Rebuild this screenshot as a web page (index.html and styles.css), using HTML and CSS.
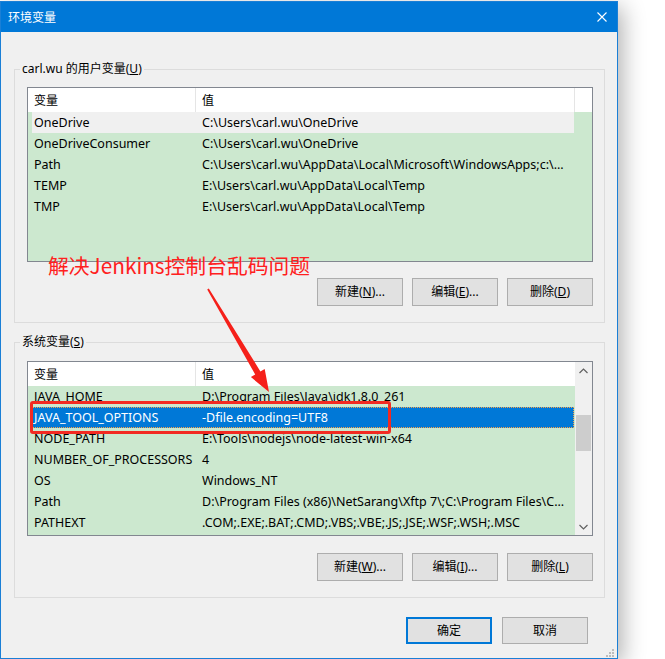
FILE: index.html
```html
<!DOCTYPE html>
<html lang="zh-CN">
<head>
<meta charset="utf-8">
<title>环境变量</title>
<link rel="stylesheet" href="styles.css">
</head>
<body>
<div class="window">
  <div class="titlebar">
    <span class="title">环境变量</span>
    <svg class="close" width="10" height="10" viewBox="0 0 10 10"><path d="M0.5 0.5 L9.5 9.5 M9.5 0.5 L0.5 9.5" stroke="#fff" stroke-width="1.1" fill="none"/></svg>
  </div>
  <div class="content">
    <fieldset class="group">
      <legend class="group-label">carl.wu 的用户变量(<u>U</u>)</legend>
      <div class="list">
        <div class="list-main">
          <div class="list-header header-user">
            <div class="hcell">变量</div>
            <div class="hcell hcell-val">值</div>
            <div class="hcell hcell-fill"></div>
          </div>
          <div class="list-body">
            <div class="row row-inactive"><span class="c1">OneDrive</span><span class="c2">C:\Users\carl.wu\OneDrive</span></div>
            <div class="row"><span class="c1">OneDriveConsumer</span><span class="c2">C:\Users\carl.wu\OneDrive</span></div>
            <div class="row"><span class="c1">Path</span><span class="c2">C:\Users\carl.wu\AppData\Local\Microsoft\WindowsApps;c:\...</span></div>
            <div class="row"><span class="c1">TEMP</span><span class="c2">E:\Users\carl.wu\AppData\Local\Temp</span></div>
            <div class="row"><span class="c1">TMP</span><span class="c2">E:\Users\carl.wu\AppData\Local\Temp</span></div>
          </div>
        </div>
      </div>
      <div class="btn-row">
        <button class="btn">新建(<u>N</u>)...</button>
        <button class="btn">编辑(<u>E</u>)...</button>
        <button class="btn">删除(<u>D</u>)</button>
      </div>
    </fieldset>

    <fieldset class="group group-sys">
      <legend class="group-label">系统变量(<u>S</u>)</legend>
      <div class="list">
        <div class="list-main">
          <div class="list-header">
            <div class="hcell">变量</div>
            <div class="hcell hcell-val">值</div>
          </div>
          <div class="list-body">
            <div class="row row-clipped"><span class="c1">JAVA_HOME</span><span class="c2">D:\Program Files\Java\jdk1.8.0_261</span></div>
            <div class="row row-selected"><span class="c1">JAVA_TOOL_OPTIONS</span><span class="c2">-Dfile.encoding=UTF8</span></div>
            <div class="row"><span class="c1">NODE_PATH</span><span class="c2">E:\Tools\nodejs\node-latest-win-x64</span></div>
            <div class="row"><span class="c1">NUMBER_OF_PROCESSORS</span><span class="c2">4</span></div>
            <div class="row"><span class="c1">OS</span><span class="c2">Windows_NT</span></div>
            <div class="row"><span class="c1">Path</span><span class="c2">D:\Program Files (x86)\NetSarang\Xftp 7\;C:\Program Files\C...</span></div>
            <div class="row"><span class="c1">PATHEXT</span><span class="c2">.COM;.EXE;.BAT;.CMD;.VBS;.VBE;.JS;.JSE;.WSF;.WSH;.MSC</span></div>
          </div>
        </div>
        <div class="scrollbar">
          <div class="sb-arrow"><svg width="9" height="6" viewBox="0 0 9 6"><path d="M0.5 5 L4.5 1 L8.5 5" stroke="#606060" stroke-width="1.2" fill="none"/></svg></div>
          <div class="sb-thumb"></div>
          <div class="sb-arrow sb-down"><svg width="9" height="6" viewBox="0 0 9 6"><path d="M0.5 1 L4.5 5 L8.5 1" stroke="#606060" stroke-width="1.2" fill="none"/></svg></div>
        </div>
      </div>
      <div class="btn-row btn-row-sys">
        <button class="btn">新建(<u>W</u>)...</button>
        <button class="btn">编辑(<u>I</u>)...</button>
        <button class="btn">删除(<u>L</u>)</button>
      </div>
    </fieldset>

    <div class="dialog-btns">
      <button class="btn btn-default">确定</button>
      <button class="btn btn-cancel">取消</button>
    </div>
  </div>
  <svg class="grip" width="10" height="10" viewBox="0 0 10 10">
    <rect x="7" y="1" width="2" height="2" fill="#bcbcbc"/>
    <rect x="4" y="4" width="2" height="2" fill="#bcbcbc"/>
    <rect x="7" y="4" width="2" height="2" fill="#bcbcbc"/>
    <rect x="1" y="7" width="2" height="2" fill="#bcbcbc"/>
    <rect x="4" y="7" width="2" height="2" fill="#bcbcbc"/>
    <rect x="7" y="7" width="2" height="2" fill="#bcbcbc"/>
  </svg>
</div>

<div class="note">解决Jenkins控制台乱码问题</div>
<svg class="arrow" width="665" height="659" viewBox="0 0 665 659">
  <polygon points="207.2,289.6 208.8,288.4 260.4,371.4 264.7,368.9 269,392 250.9,377.1 255.2,374.6" fill="#f5201a"/>
</svg>
<div class="highlight"></div>
</body>
</html>
```

FILE: styles.css
```css
* { box-sizing: border-box; }

html, body {
  margin: 0;
  padding: 0;
  background: #ffffff;
}

body {
  position: relative;
  width: 665px;
  height: 659px;
  overflow: hidden;
  padding-top: 1px;
  font-family: "Noto Sans", "Noto Sans CJK SC", sans-serif;
  font-size: 12px;
  color: #000;
}

.window {
  position: relative;
  width: 618px;
  height: 658px;
  background: #f0f0f0;
  border: 1px solid #1a7fd6;
  box-shadow: 4px 6px 22px rgba(0, 0, 0, 0.32);
  overflow: hidden;
}

.titlebar {
  height: 30px;
  background: #0078d7;
  display: flex;
  align-items: center;
  justify-content: space-between;
  padding: 0 10px 0 7px;
  color: #fff;
}

.title {
  font-family: "Noto Sans CJK SC", sans-serif;
  font-size: 12px;
  line-height: 16px;
}

.close { display: block; }

.content {
  padding: 29px 12px 0 13px;
}

.group {
  margin: 0;
  min-width: 0;
  border: 1px solid #dcdcdc;
  padding: 10px 11px 16px 12px;
}

.group-sys {
  margin-top: 11px;
  padding-top: 11px;
}

.group-label {
  margin-left: -7px;
  padding: 0 2px;
  line-height: 16px;
  font-size: 12px;
}

.group-label u, .btn u { text-underline-offset: 1px; }

.list {
  height: 175px;
  border: 1px solid #828790;
  background: #cce8cf;
  display: flex;
  overflow: hidden;
}

.list-main {
  flex: 1;
  min-width: 0;
  display: flex;
  flex-direction: column;
}

.list-header {
  height: 24px;
  flex: none;
  background: #fff;
  display: grid;
  grid-template-columns: 167px 1fr;
}

.header-user {
  grid-template-columns: 167px 379px 1fr;
}

.hcell {
  padding-left: 6px;
  line-height: 24px;
  white-space: nowrap;
  font-family: "Noto Sans CJK SC", sans-serif;
}

.hcell-val {
  border-left: 1px solid #e5e5e5;
}

.hcell-fill {
  border-left: 1px solid #e5e5e5;
}

.list-body {
  flex: 1;
}

.row {
  margin-left: 4px;
  width: 542px;
  height: 21px;
  display: grid;
  grid-template-columns: 163px 1fr;
  line-height: 21px;
  white-space: nowrap;
  font-size: 12.5px;
}

.c1 {
  padding-left: 2px;
  overflow: hidden;
}

.c2 {
  padding-left: 7px;
  overflow: hidden;
}

.row-inactive {
  background: #f0f0f0;
}

.row-clipped span {
  clip-path: inset(6px 0 0 0);
}

.row-selected {
  background: #0078d7;
  color: #fff;
  outline: 1px dotted #f7a14a;
  outline-offset: -1px;
}

.scrollbar {
  width: 17px;
  flex: none;
  background: #f0f0f0;
  display: flex;
  flex-direction: column;
  align-items: center;
}

.sb-arrow {
  width: 17px;
  height: 17px;
  display: flex;
  align-items: center;
  justify-content: center;
}

.sb-thumb {
  width: 15px;
  height: 36px;
  margin-top: 36px;
  background: #cdcdcd;
}

.sb-down {
  margin-top: auto;
}

.btn-row {
  display: flex;
  justify-content: flex-end;
  gap: 9px;
  margin-top: 16px;
  padding-right: 0;
}

.btn-row-sys {
  margin-top: 17px;
}

.btn {
  width: 86px;
  height: 28px;
  margin: 0;
  padding: 0;
  background: #e1e1e1;
  border: 1px solid #adadad;
  border-radius: 0;
  font-family: "Noto Sans", "Noto Sans CJK SC", sans-serif;
  font-size: 12px;
  color: #000;
  line-height: 1;
}

.dialog-btns {
  display: flex;
  justify-content: flex-end;
  gap: 10px;
  margin-top: 19px;
  padding-right: 17px;
}

.dialog-btns .btn {
  height: 27px;
}

.btn-default {
  border: 2px solid #0078d7;
}

.grip {
  position: absolute;
  right: 2px;
  bottom: 0;
}

.note {
  position: absolute;
  left: 48px;
  top: 252px;
  font-family: "Noto Sans CJK SC", sans-serif;
  font-size: 20.8px;
  line-height: 26px;
  color: #ff2020;
  white-space: nowrap;
}

.arrow {
  position: absolute;
  left: 0;
  top: 0;
  pointer-events: none;
}

.highlight {
  position: absolute;
  left: 30px;
  top: 401px;
  width: 361px;
  height: 33px;
  border: 3px solid #f22a22;
  border-radius: 3px;
}
```
